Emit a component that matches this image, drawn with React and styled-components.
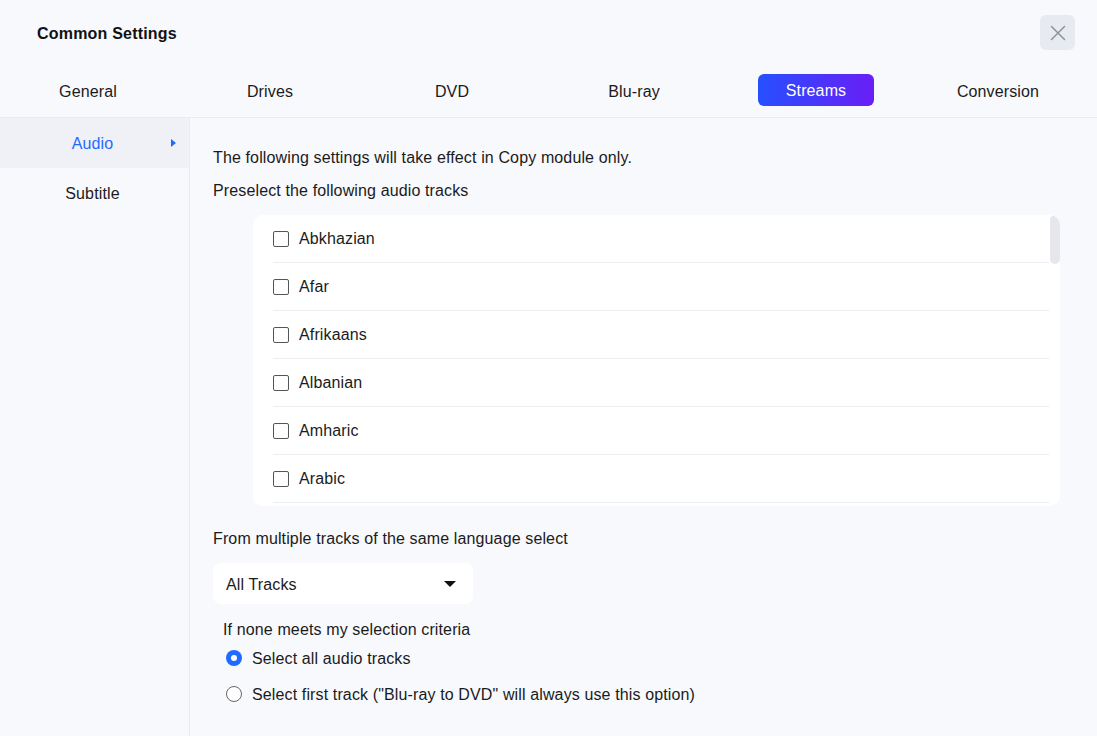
import React from "react";
import styled, { createGlobalStyle } from "styled-components";

const Global = createGlobalStyle`
  html, body { margin: 0; padding: 0; }
  body { background: #f7f9fd; font-family: "Liberation Sans", Arial, sans-serif; }
  * { box-sizing: border-box; }
`;

const Window = styled.div`
  width: 1097px;
  height: 736px;
  background: #f7f9fd;
  color: #1b1b1b;
  font-size: 16px;
  letter-spacing: 0.13px;
  display: flex;
  flex-direction: column;
  overflow: hidden;
`;

const Header = styled.div`
  height: 65px;
  display: flex;
  align-items: center;
  justify-content: space-between;
  padding: 0 22px 0 37px;
`;

const Title = styled.div`
  font-weight: bold;
  font-size: 16px;
  letter-spacing: 0.2px;
  color: #111;
  margin-top: 2px;
`;

const CloseButton = styled.button`
  width: 35px;
  height: 35px;
  border: none;
  border-radius: 6px;
  background: #e7ebef;
  display: flex;
  align-items: center;
  justify-content: center;
  padding: 0;
  cursor: pointer;
`;

const Tabs = styled.div`
  height: 53px;
  display: grid;
  grid-template-columns: repeat(6, 182px);
  margin-left: -3px;
  align-items: center;
  border-bottom: 1px solid #e9ecf1;
`;

const Tab = styled.div`
  justify-self: center;
  width: 116px;
  height: 32px;
  border-radius: 6px;
  display: flex;
  align-items: center;
  justify-content: center;
  margin-top: -2px;
  padding-top: ${(p) => (p.$active ? 1 : 3)}px;
  font-size: 16px;
  color: ${(p) => (p.$active ? "#fff" : "#1b1b1b")};
  background: ${(p) => (p.$active ? "linear-gradient(90deg, #2650ff 0%, #6a1ef6 100%)" : "transparent")};
`;

const Body = styled.div`
  flex: 1;
  display: flex;
  min-height: 0;
`;

const Sidebar = styled.div`
  width: 190px;
  border-right: 1px solid #e9ecf1;
  display: flex;
  flex-direction: column;
`;

const SideItem = styled.div`
  position: relative;
  height: 50px;
  display: flex;
  align-items: center;
  justify-content: center;
  padding-right: 4px;
  padding-top: 2px;
  color: ${(p) => (p.$active ? "#1f6bff" : "#1b1b1b")};
  background: ${(p) => (p.$active ? "#eff1f6" : "transparent")};
`;

const SideArrow = styled.span`
  position: absolute;
  left: 171px;
  top: 50%;
  margin-top: -4px;
  width: 0;
  height: 0;
  border-top: 4px solid transparent;
  border-bottom: 4px solid transparent;
  border-left: 5px solid #1f6bff;
`;

const Content = styled.div`
  flex: 1;
  padding: 30px 37px 0 23px;
  display: flex;
  flex-direction: column;
  align-items: flex-start;
`;

const Line = styled.div`
  line-height: 20px;
  margin-top: ${(p) => p.$mt || 0}px;
  margin-left: ${(p) => p.$ml || 0}px;
`;

const ListBox = styled.div`
  position: relative;
  margin-top: 14px;
  margin-left: 40px;
  align-self: stretch;
  height: 291px;
  background: #fff;
  border-radius: 10px;
  overflow: hidden;
`;

const ListScroll = styled.div`
  height: 100%;
  overflow: hidden;
`;

const ScrollThumb = styled.div`
  position: absolute;
  right: 0;
  top: 0;
  width: 10px;
  height: 49px;
  border-radius: 5px;
  background: #e5e7ec;
`;

const Row = styled.label`
  height: 48px;
  margin-left: 20px;
  margin-right: 11px;
  border-bottom: 1px solid #ebedf0;
  display: flex;
  align-items: center;
  gap: 10px;
  padding-top: 1px;
`;

const Check = styled.span`
  width: 16px;
  height: 16px;
  border: 1px solid #555;
  border-radius: 2px;
  background: #fff;
  flex: none;
  margin-top: -1px;
`;

const Select = styled.div`
  margin-top: 14px;
  width: 260px;
  height: 41px;
  background: #fff;
  border-radius: 8px;
  display: flex;
  align-items: center;
  justify-content: space-between;
  padding: 2px 17px 0 13px;
`;

const Caret = styled.span`
  width: 0;
  height: 0;
  border-left: 6px solid transparent;
  border-right: 6px solid transparent;
  border-top: 6px solid #111;
  margin-top: -2px;
`;

const RadioGroup = styled.div`
  display: flex;
  flex-direction: column;
`;

const RadioRow = styled.div`
  height: 36px;
  margin-left: 13px;
  display: flex;
  align-items: center;
  gap: 10px;
  padding-top: 1px;
`;

const Radio = styled.span`
  width: 16px;
  height: 16px;
  border-radius: 50%;
  flex: none;
  margin-top: -1px;
  ${(p) =>
    p.$checked
      ? `background: #1f6bff; position: relative;
         &::after { content: ""; position: absolute; left: 5px; top: 5px; width: 6px; height: 6px; border-radius: 50%; background: #fff; }`
      : `border: 1px solid #666; background: #fff;`}
`;

const languages = ["Abkhazian", "Afar", "Afrikaans", "Albanian", "Amharic", "Arabic"];

const tabs = ["General", "Drives", "DVD", "Blu-ray", "Streams", "Conversion"];

export default function App() {
  return (
    <>
      <Global />
      <Window>
        <Header>
          <Title>Common Settings</Title>
          <CloseButton aria-label="Close">
            <svg width="16" height="16" viewBox="0 0 16 16">
              <path d="M1.5 1.5 L14.5 14.5 M14.5 1.5 L1.5 14.5" stroke="#8b939c" strokeWidth="1.5" strokeLinecap="round" />
            </svg>
          </CloseButton>
        </Header>
        <Tabs>
          {tabs.map((t) => (
            <Tab key={t} $active={t === "Streams"}>{t}</Tab>
          ))}
        </Tabs>
        <Body>
          <Sidebar>
            <SideItem $active>
              Audio
              <SideArrow />
            </SideItem>
            <SideItem>Subtitle</SideItem>
          </Sidebar>
          <Content>
            <Line>The following settings will take effect in Copy module only.</Line>
            <Line $mt={13}>Preselect the following audio tracks</Line>
            <ListBox>
              <ListScroll>
                {languages.map((l) => (
                  <Row key={l}>
                    <Check />
                    <span>{l}</span>
                  </Row>
                ))}
              </ListScroll>
              <ScrollThumb />
            </ListBox>
            <Line $mt={23}>From multiple tracks of the same language select</Line>
            <Select>
              <span>All Tracks</span>
              <Caret />
            </Select>
            <Line $mt={16} $ml={10}>If none meets my selection criteria</Line>
            <RadioGroup>
              <RadioRow>
                <Radio $checked />
                <span>Select all audio tracks</span>
              </RadioRow>
              <RadioRow>
                <Radio />
                <span>Select first track ("Blu-ray to DVD" will always use this option)</span>
              </RadioRow>
            </RadioGroup>
          </Content>
        </Body>
      </Window>
    </>
  );
}
